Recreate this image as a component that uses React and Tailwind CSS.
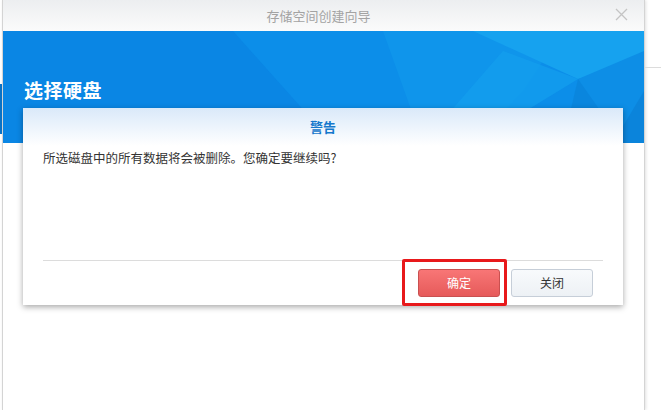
import React from "react";

const font = { fontFamily: '"Noto Sans CJK SC", "Noto Sans", sans-serif' };

export default function App() {
  return (
    <div className="relative w-[661px] h-[410px] overflow-hidden bg-white flex" style={font}>
      {/* left background strip */}
      <div className="w-[2px] shrink-0 flex flex-col">
        <div className="h-[84px]" />
        <div className="h-[50px] bg-[#0a74c8]" />
      </div>
      {/* window */}
      <div className="w-[643px] shrink-0 flex flex-col border-l border-r border-[#d4d4d4] shadow-[1px_0_3px_rgba(0,0,0,0.12)]">
        {/* title bar */}
        <div className="relative h-[31px] shrink-0 flex items-center justify-center bg-gradient-to-b from-[#eceef0] to-[#fbfbfb]">
          <span className="text-[13px] text-[#a3a3a3] -ml-[10px]">存储空间创建向导</span>
          <svg className="absolute right-[16px] top-[8px]" width="13" height="13" viewBox="0 0 13 13">
            <path d="M1 1 L12 12 M12 1 L1 12" stroke="#c4c4c4" strokeWidth="1.3" />
          </svg>
        </div>
        {/* banner */}
        <div className="relative h-[112px] shrink-0 bg-[#0a86e4] overflow-hidden">
          <svg className="absolute inset-0" width="641" height="112" viewBox="0 0 641 112" preserveAspectRatio="none">
            <polygon points="230,0 641,0 641,112 330,112" fill="#0c8ee9" />
            <polygon points="380,0 560,0 520,60 470,112 420,112" fill="#0f95eb" />
            <polygon points="470,0 641,0 641,30 575,48" fill="#16a2ef" />
            <polygon points="575,48 641,20 641,70 610,112 560,112" fill="#0d8ee6" />
            <polygon points="575,48 620,112 560,112" fill="#0a86de" />
            <polygon points="500,20 575,48 470,112 420,112" fill="#14a0ee" opacity="0.7" />
            <polygon points="610,112 641,60 641,112" fill="#0b84db" />
          </svg>
          <div className="absolute left-[21px] top-[45px] text-[19px] font-bold text-white tracking-[0.5px]">选择硬盘</div>
        </div>
        <div className="flex-1 bg-white" />
      </div>
      {/* right background */}
      <div className="flex-1 flex flex-col">
        <div className="h-[67px]" />
        <div className="h-px bg-[#dcdcdc]" />
      </div>

      {/* modal dialog */}
      <div className="absolute left-[23px] top-[108px] w-[600px] h-[197px] bg-white flex flex-col shadow-[0_2px_6px_rgba(0,0,0,0.35)]">
        <div className="h-[38px] shrink-0 flex items-center justify-center bg-gradient-to-b from-[#dae9f9] to-[#ffffff]">
          <span className="text-[13px] font-bold text-[#1578cc]">警告</span>
        </div>
        <div className="px-[20px] pt-[3px] text-[12.5px] text-[#333]">所选磁盘中的所有数据将会被删除。您确定要继续吗?</div>
        <div className="flex-1" />
        <div className="mx-[20px] h-px bg-[#dcdcdc]" />
        <div className="h-[44px] shrink-0 flex items-start justify-end pr-[30px] pt-[8px] gap-[11px]">
          <div className="relative">
            <div className="absolute -left-[16px] -top-[10px] w-[105px] h-[47px] border-[3px] border-[#e8191b] rounded-[2px]" />
            <button className="w-[82px] h-[28px] rounded-[3px] border border-[#c95050] bg-gradient-to-b from-[#f87676] to-[#e65a5a] text-white text-[12px]">确定</button>
          </div>
          <button className="w-[82px] h-[28px] rounded-[3px] border border-[#c6ced8] bg-gradient-to-b from-[#f8fafc] to-[#edf1f5] text-[#333] text-[12px]">关闭</button>
        </div>
      </div>
    </div>
  );
}
